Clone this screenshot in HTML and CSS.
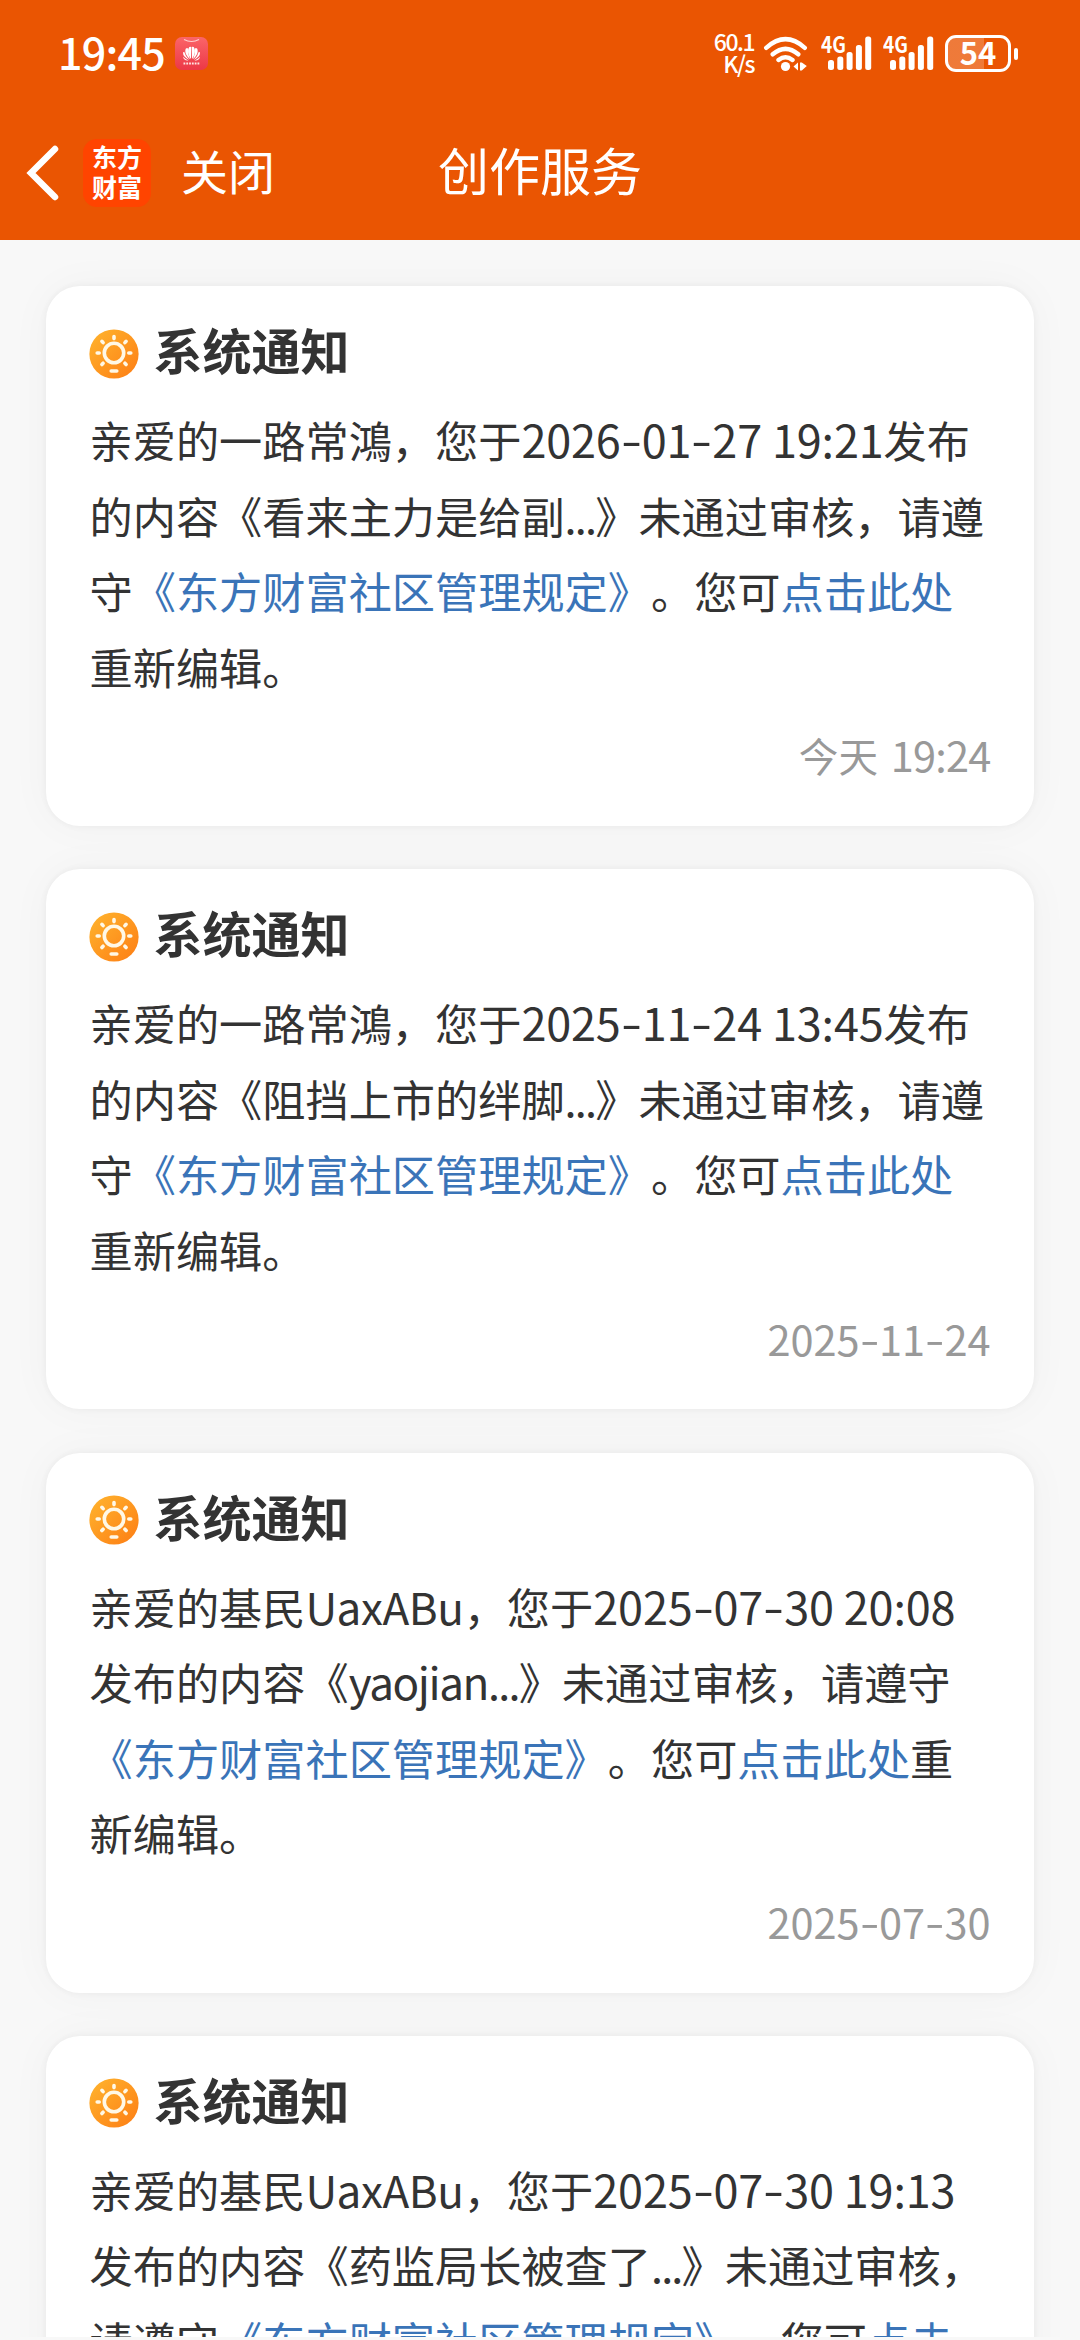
FILE: index.html
```html
<!DOCTYPE html>
<html lang="zh-CN">
<head>
<meta charset="utf-8">
<title>创作服务</title>
<link rel="stylesheet" href="styles.css">
</head>
<body>
<svg class="defs" width="0" height="0">
  <defs>
    <linearGradient id="sun-bg" x1="0" y1="0" x2="1" y2="1">
      <stop offset="0" stop-color="#ffb52e"/><stop offset="1" stop-color="#fd7d14"/>
    </linearGradient>
    <linearGradient id="store-bg" x1="0" y1="0" x2="0" y2="1">
      <stop offset="0" stop-color="#fb6568"/><stop offset="1" stop-color="#ec3847"/>
    </linearGradient>
    <symbol id="sun" viewBox="0 0 50 50">
      <circle cx="25" cy="25" r="24.6" fill="url(#sun-bg)"/>
      <g fill="none" stroke="#fff8e6" stroke-width="3.6" stroke-linecap="round">
        <circle cx="25" cy="24" r="9.7"/>
        <path d="M25 7.6v2M12.9 12.3l1.2 1.3M37.1 12.3l-1.2 1.3M8.2 24h2M39.8 24h2M12.9 35.5l1.2-1.3M37.1 35.5l-1.2-1.3M22.2 42h5.6"/>
      </g>
    </symbol>
    <symbol id="signal" viewBox="0 0 52 38">
      <text class="net" x="0" y="18.300" textLength="25" lengthAdjust="spacingAndGlyphs">4G</text>
      <g fill="#fff"><rect x="7" y="25" width="6" height="10" rx="2.500"/><rect x="16.300" y="21.500" width="6" height="13.500" rx="2.500"/><rect x="25.600" y="17" width="6" height="18" rx="2.500"/><rect x="34.900" y="10" width="6" height="25" rx="2.500"/><rect x="44.200" y="1.500" width="6" height="33.500" rx="2.500"/></g>
    </symbol>
  </defs>
</svg>
<div class="screen">
  <header class="top">
    <div class="status">
      <span class="clock">19:45</span>
      <svg class="store" viewBox="0 0 33 33">
        <rect width="33" height="33" rx="7" fill="url(#store-bg)"/>
        <path d="M9 2.500q7.500 4 15 0" fill="none" stroke="#ffd0cf" stroke-width="1.200"/>
        <g fill="#fff">
          <path d="M16 22C13 18 12 13 14.300 10q1.400-.6 1.900 0zM17 22c3-4 4-9 1.700-12q-1.400-.6-1.900 0z"/>
          <path d="M15 22.300C10.500 18.500 9.500 14 10.900 11.500q1.600-.8 2 0Q12.700 17 15 22.300zM18 22.300c4.500-3.800 5.500-8.300 4.100-10.800q-1.600-.8-2 0Q20.300 17 18 22.300z"/>
          <path d="M14.300 22.900Q7.800 20 8 15.500l1.200-.7Q10.300 19.500 14.300 22.900zM18.700 22.900q6.500-2.900 6.300-7.400l-1.200-.7Q22.700 19.500 18.700 22.900zM13.500 23.400Q9 24 8 19.700q2.500 2.900 5.500 3.700zM19.500 23.400q4.500.6 5.500-3.700-2.500 2.900-5.500 3.700z"/>
        </g>
        <path d="M8.500 26.500h16" stroke="#ffe3e3" stroke-width="2" stroke-dasharray="1.800 1"/>
      </svg>
      <div class="speed"><span>60.1</span><span>K/s</span></div>
      <svg class="wifi" viewBox="0 0 46 36">
        <g fill="none" stroke="#fff" stroke-width="4.400" stroke-linecap="round">
          <path d="M3.200 11.800Q22.500-5.500 41.800 11.800M9.700 18.300Q22.500 7.500 35.300 18.300M15.500 24Q22.500 18.500 29.500 24"/>
        </g>
        <circle cx="22.500" cy="30.500" r="4.600" fill="#fff"/>
        <path d="M30.500 30.500l4.500-4v8zM37 26.500h1.800l5 3.500-5 4.500H37z" fill="#fff"/>
      </svg>
      <svg class="bars"><use href="#signal"/></svg>
      <svg class="bars second"><use href="#signal"/></svg>
      <div class="battery"><span>54</span></div>
      <i class="nub"></i>
    </div>
    <nav class="nav">
      <svg class="back" viewBox="0 0 34 58"><path d="M29 5L5 29l24 24" fill="none" stroke="#fff" stroke-width="6.500" stroke-linecap="round" stroke-linejoin="miter"/></svg>
      <div class="logo"><span>东方</span><span>财富</span></div>
      <span class="close">关闭</span>
      <h1 class="title">创作服务</h1>
    </nav>
  </header>
  <main class="list">
    <article class="card">
      <h2><svg class="sun"><use href="#sun"/></svg>系统通知</h2>
      <p>亲爱的一路常鴻，您于<span class="num">2026<i>-</i>01<i>-</i>27 19:21</span>发布<br>的内容《看来主力是给副<span class="dots">...</span>》未通过审核，请遵<br>守<a>《东方财富社区管理规定》</a>。您可<a>点击此处</a><br>重新编辑。</p>
      <time class="today">今天 <span class="num">19:24</span></time>
    </article>
    <article class="card">
      <h2><svg class="sun"><use href="#sun"/></svg>系统通知</h2>
      <p>亲爱的一路常鴻，您于<span class="num">2025<i>-</i>11<i>-</i>24 13:45</span>发布<br>的内容《阻挡上市的绊脚<span class="dots">...</span>》未通过审核，请遵<br>守<a>《东方财富社区管理规定》</a>。您可<a>点击此处</a><br>重新编辑。</p>
      <time><span class="num">2025<i>-</i>11<i>-</i>24</span></time>
    </article>
    <article class="card">
      <h2><svg class="sun"><use href="#sun"/></svg>系统通知</h2>
      <p>亲爱的基民<span class="latin">UaxABu</span>，您于<span class="num">2025<i>-</i>07<i>-</i>30 20:08</span><br>发布的内容《<span class="latin tight">yaojian</span><span class="dots">...</span>》未通过审核，请遵守<br><a>《东方财富社区管理规定》</a>。您可<a>点击此处</a>重<br>新编辑。</p>
      <time><span class="num">2025<i>-</i>07<i>-</i>30</span></time>
    </article>
    <article class="card">
      <h2><svg class="sun"><use href="#sun"/></svg>系统通知</h2>
      <p>亲爱的基民<span class="latin">UaxABu</span>，您于<span class="num">2025<i>-</i>07<i>-</i>30 19:13</span><br>发布的内容《药监局长被查了<span class="dots">...</span>》未通过审核，<br>请遵守<a>《东方财富社区管理规定》</a>。您可<a>点击</a></p>
    </article>
  </main>
</div>
</body>
</html>
```
FILE: styles.css
```css
* { box-sizing: border-box; }
body {
  margin: 0;
  background: #f8f8f8;
  color: #333;
  font-family: "Noto Sans CJK SC", sans-serif;
  text-spacing-trim: space-all;
}
.defs { position: absolute; }
.screen {
  display: flex;
  flex-direction: column;
  width: 1080px;
  height: 2340px;
  overflow: hidden;
}
.top {
  flex: none;
  height: 240px;
  background: #ea5502;
  color: #fff;
}
.status {
  display: flex;
  align-items: center;
  height: 107px;
  padding-left: 58px;
}
.clock {
  width: 117px;
  padding-bottom: 5px;
  font-size: 43px;
  font-weight: 500;
  line-height: 60px;
  letter-spacing: -0.8px;
}
.store { width: 33px; height: 33px; }
.speed {
  display: flex;
  flex-direction: column;
  align-items: flex-end;
  width: 46px;
  margin-left: 500px;
  padding-bottom: 3px;
  font-size: 23px;
  font-weight: 500;
  line-height: 22px;
  letter-spacing: -1.5px;
}
.wifi { width: 46px; height: 36px; margin-left: 9px; }
.bars { width: 52px; height: 38px; margin-left: 12px; }
.second { margin-left: 10px; }
.net { font-size: 22px; font-weight: 700; fill: #fff; }
.battery {
  width: 66px;
  height: 37px;
  margin-left: 10px;
  padding: 1px;
  border: 3px solid #fff;
  border-radius: 11px;
  background: linear-gradient(90deg, rgba(255,255,255,.22) 60%, transparent 60%);
  font-size: 31px;
  font-weight: 700;
  line-height: 26px;
  text-align: center;
}
.nub {
  width: 4px;
  height: 12px;
  margin-left: 3px;
  border-radius: 2px;
  background: #fff;
}
.nav {
  position: relative;
  display: flex;
  align-items: center;
  height: 132px;
  padding-left: 26px;
}
.back { width: 34px; height: 58px; }
.logo {
  display: flex;
  flex-direction: column;
  align-items: center;
  justify-content: center;
  width: 68px;
  height: 68px;
  margin-left: 23px;
  padding-bottom: 4px;
  border-radius: 14px;
  background: #ff4400;
  font-size: 25px;
  font-weight: 700;
  line-height: 30px;
}
.close {
  margin-left: 30px;
  padding-bottom: 6px;
  font-size: 47px;
  line-height: 64px;
}
.title {
  position: absolute;
  inset: 0;
  margin: 0;
  font-size: 51px;
  font-weight: 400;
  line-height: 125px;
  text-align: center;
  pointer-events: none;
}
.list {
  display: flex;
  flex-direction: column;
  gap: 43.300px;
  height: 2097px;
  padding: 46px 46px 0;
  overflow: hidden;
}
.card {
  flex: none;
  display: flex;
  flex-direction: column;
  height: 540px;
  padding: 25px 43.500px 0;
  border-radius: 34px;
  background: #fff;
  box-shadow: 0 0 44px rgba(0,0,0,.035), 0 0 7px rgba(0,0,0,.05);
}
h2 {
  display: flex;
  align-items: center;
  gap: 15px;
  height: 76px;
  margin: 0;
  font-size: 49px;
  font-weight: 700;
  line-height: 70px;
}
.sun { width: 50px; height: 50px; margin: 9px 0 0 -1px; }
p {
  margin: 15px 0 0;
  font-size: 43.200px;
  line-height: 75.600px;
  white-space: nowrap;
}
a { color: #3a74b8; }
.num {
  font-size: 45px;
  line-height: 1;
  letter-spacing: -.15px;
}
/* Wide, slightly raised hyphen between the parts of a date */
.num i {
  display: inline-block;
  width: .467em;
  font-style: normal;
  text-align: center;
  transform: translateY(-1px) scaleX(1.35);
}
.latin { font-size: 44px; line-height: 1; letter-spacing: -.4px; }
.tight { letter-spacing: -1.400px; }
.dots { letter-spacing: -1.800px; }
time {
  margin-top: 21px;
  color: #999;
  font-size: 39.600px;
  line-height: 60px;
  text-align: right;
}
time .num { font-size: 41.500px; letter-spacing: 0; }
.today { word-spacing: 4px; }
.today .num { letter-spacing: -.8px; }
```
